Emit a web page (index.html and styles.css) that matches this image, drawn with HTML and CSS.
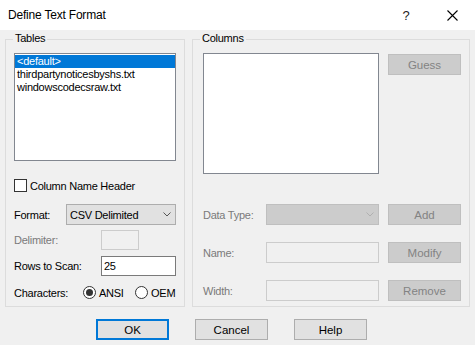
FILE: index.html
```html
<!DOCTYPE html>
<html>
<head>
<meta charset="utf-8">
<link rel="stylesheet" href="styles.css">
</head>
<body>
<div class="window">
  <div class="titlebar">
    <span class="title">Define Text Format</span>
    <div class="caption">
      <span class="cap-btn cap-help">?</span>
      <span class="cap-btn cap-close"><svg width="11" height="11" viewBox="0 0 11 11"><path d="M0.5 0.5 L10.5 10.5 M10.5 0.5 L0.5 10.5" stroke="#000" stroke-width="1.1" fill="none"/></svg></span>
    </div>
  </div>
  <div class="content">
    <div class="groups">
      <div class="group tables">
        <span class="legend">Tables</span>
        <div class="listbox tlist">
          <div class="item sel">&lt;default&gt;</div>
          <div class="item">thirdpartynoticesbyshs.txt</div>
          <div class="item">windowscodecsraw.txt</div>
        </div>
        <div class="check-row"><span class="checkbox"></span><span>Column Name Header</span></div>
        <div class="row format-row">
          <span class="lbl lbl-format">Format:</span>
          <div class="combo">
            <span>CSV Delimited</span>
            <svg width="8" height="5" viewBox="0 0 8 5"><path d="M0.5 0.5 L4 4 L7.5 0.5" stroke="#555" stroke-width="1" fill="none"/></svg>
          </div>
        </div>
        <div class="row delim-row">
          <span class="lbl lbl-wide disabled">Delimiter:</span>
          <div class="textbox tb-disabled tb-delim"></div>
        </div>
        <div class="row scan-row">
          <span class="lbl lbl-wide">Rows to Scan:</span>
          <div class="textbox tb-scan">25</div>
        </div>
        <div class="row radio-row">
          <span class="lbl lbl-chars">Characters:</span>
          <span class="radio checked"></span><span class="radio-text ansi">ANSI</span>
          <span class="radio"></span><span class="radio-text">OEM</span>
        </div>
      </div>
      <div class="group columns">
        <span class="legend">Columns</span>
        <div class="ctop">
          <div class="listbox clist"></div>
          <div class="btn btn-disabled btn-guess">Guess</div>
        </div>
        <div class="crow crow-first">
          <span class="clbl disabled">Data Type:</span>
          <div class="combo combo-disabled">
            <svg width="8" height="5" viewBox="0 0 8 5"><path d="M0.5 0.5 L4 4 L7.5 0.5" stroke="#b0b0b0" stroke-width="1" fill="none"/></svg>
          </div>
          <div class="btn btn-disabled">Add</div>
        </div>
        <div class="crow">
          <span class="clbl disabled">Name:</span>
          <div class="textbox tb-disabled tb-col"></div>
          <div class="btn btn-disabled">Modify</div>
        </div>
        <div class="crow">
          <span class="clbl disabled">Width:</span>
          <div class="textbox tb-disabled tb-col"></div>
          <div class="btn btn-disabled">Remove</div>
        </div>
      </div>
    </div>
    <div class="buttons">
      <div class="btn btn-default">OK</div>
      <div class="btn">Cancel</div>
      <div class="btn">Help</div>
    </div>
  </div>
</div>
</body>
</html>
```
FILE: styles.css
```css
html, body {
  margin: 0;
  padding: 0;
}
body {
  width: 475px;
  height: 345px;
  overflow: hidden;
  background: #f0f0f0;
  font-family: "Liberation Sans", Arial, sans-serif;
  font-size: 11px;
  letter-spacing: -0.25px;
  color: #000;
}
.window {
  width: 475px;
  height: 345px;
  display: flex;
  flex-direction: column;
}
.titlebar {
  height: 30px;
  background: #fff;
  display: flex;
  align-items: center;
  justify-content: space-between;
}
.title {
  padding-left: 8px;
  font-size: 12px;
  letter-spacing: -0.2px;
  line-height: 30px;
}
.caption {
  display: flex;
  height: 30px;
}
.cap-btn {
  width: 46px;
  height: 30px;
  display: flex;
  align-items: center;
  justify-content: center;
}
.cap-help {
  font-size: 13px;
  letter-spacing: 0;
  color: #222;
  padding-top: 1px;
  box-sizing: border-box;
}
.content {
  padding: 9px 0 0 5px;
}
.groups {
  display: flex;
  gap: 7px;
}
.group {
  position: relative;
  box-sizing: border-box;
  height: 268px;
  border: 1px solid #dcdcdc;
  padding-top: 13px;
  display: flex;
  flex-direction: column;
}
.legend {
  position: absolute;
  top: -8px;
  left: 7px;
  padding: 0 2px;
  line-height: 13px;
  background: #f0f0f0;
}
.tables {
  width: 180px;
  padding-left: 8px;
  padding-right: 8px;
}
.listbox {
  box-sizing: border-box;
  background: #fff;
  border: 1px solid #828790;
  padding: 1px 0;
}
.tlist {
  height: 108px;
}
.item {
  line-height: 13px;
  height: 13px;
  padding-left: 2px;
  white-space: nowrap;
}
.item.sel {
  background: #0078d7;
  color: #fff;
}
.check-row {
  margin-top: 18px;
  height: 13px;
  display: flex;
  align-items: center;
  gap: 3px;
}
.checkbox {
  box-sizing: border-box;
  width: 13px;
  height: 13px;
  border: 1px solid #333;
  background: #fff;
}
.row {
  display: flex;
  align-items: center;
}
.format-row {
  margin-top: 12px;
  height: 21px;
}
.delim-row {
  margin-top: 5px;
  height: 20px;
}
.scan-row {
  margin-top: 6px;
  height: 20px;
}
.radio-row {
  margin-top: 10px;
  height: 13px;
}
.lbl-format {
  width: 52px;
}
.lbl-wide {
  width: 87px;
}
.lbl-chars {
  width: 69px;
}
.disabled {
  color: #7a7a7a;
}
.combo {
  box-sizing: border-box;
  flex: 1;
  height: 21px;
  background: #e1e1e1;
  border: 1px solid #adadad;
  display: flex;
  align-items: center;
  justify-content: space-between;
  padding: 0 4px 0 3px;
}
.combo-disabled {
  flex: none;
  width: 113px;
  background: #cccccc;
  border-color: #bfbfbf;
  justify-content: flex-end;
}
.textbox {
  box-sizing: border-box;
  height: 20px;
  background: #fff;
  border: 1px solid #7a7a7a;
  padding-left: 2px;
  line-height: 18px;
}
.tb-disabled {
  background: #f0f0f0;
  border-color: #cccccc;
}
.tb-delim {
  width: 38px;
}
.tb-scan {
  flex: 1;
}
.radio {
  box-sizing: border-box;
  width: 13px;
  height: 13px;
  border: 1px solid #333;
  border-radius: 50%;
  background: #fff;
  display: flex;
  align-items: center;
  justify-content: center;
}
.radio.checked::after {
  content: "";
  width: 7px;
  height: 7px;
  border-radius: 50%;
  background: #333;
}
.radio-text {
  margin-left: 3px;
}
.radio-text.ansi {
  width: 36px;
}
.columns {
  width: 278px;
  padding-left: 10px;
  padding-right: 8px;
}
.ctop {
  display: flex;
  gap: 9px;
  align-items: flex-start;
}
.clist {
  width: 176px;
  height: 121px;
}
.btn-guess {
  margin-top: 1px;
}
.crow {
  display: flex;
  align-items: center;
  gap: 9px;
  height: 21px;
  margin-top: 17px;
}
.crow-first {
  margin-top: 30px;
}
.clbl {
  width: 63px;
  margin-right: -9px;
}
.tb-col {
  width: 113px;
  height: 21px;
}
.btn {
  box-sizing: border-box;
  width: 73px;
  height: 21px;
  background: #e1e1e1;
  border: 1px solid #adadad;
  display: flex;
  align-items: center;
  justify-content: center;
  letter-spacing: 0;
  font-size: 11.5px;
}
.btn-disabled {
  background: #cccccc;
  border-color: #bfbfbf;
  color: #838383;
}
.btn-default {
  border: 2px solid #0078d7;
}
.buttons {
  display: flex;
  gap: 26px;
  margin-top: 12px;
  padding-left: 91px;
}
```
